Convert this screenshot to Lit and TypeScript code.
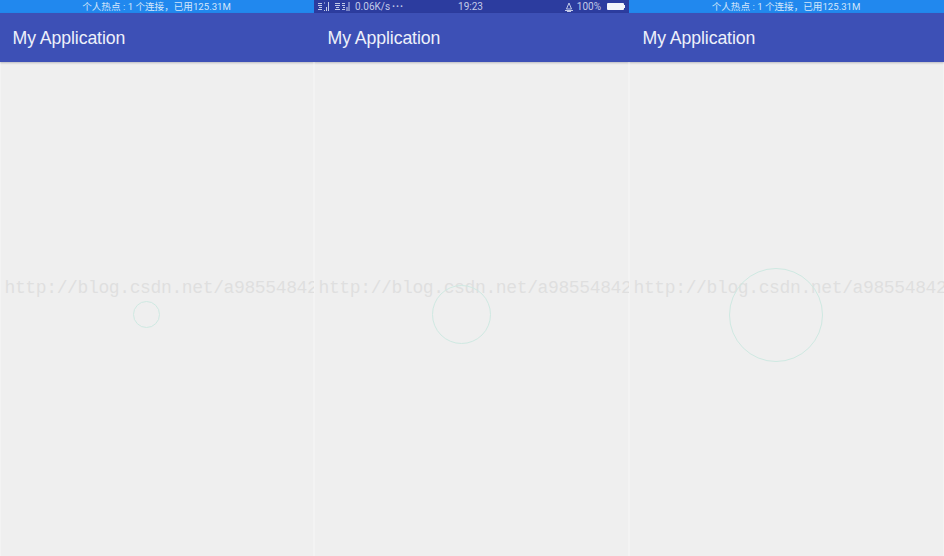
import { LitElement, html, css } from "lit";
import { customElement, property } from "lit/decorators.js";

@customElement("phone-panel")
class PhonePanel extends LitElement {
  @property({ type: Boolean }) dark = false;
  @property({ type: Boolean, reflect: true }) first = false;
  @property({ type: Number }) radius = 13;
  @property({ type: Number }) cx = 147;
  static styles = css`
    :host { display: flex; flex-direction: column; position: relative; overflow: hidden; background: #efefef; height: 556px; }
    .status { height: 13px; flex: none; background: #2188ee; color: #d3e6fb; font: 9.6px/13px "Roboto","Noto Sans CJK SC",sans-serif; text-align: center; padding-right: 1px; }
    .status.dark { background: #2c3c9f; color: #c3cbe8; font-size: 10px; display: grid; grid-template-columns: 1fr auto 1fr; align-items: center; padding: 0 4px 0 3px; text-align: left; }
    .left, .right { display: flex; align-items: center; }
    .left { gap: 3px; }
    .speed { margin-left: 1px; white-space: nowrap; }
    .dots { letter-spacing: 1px; font-weight: 700; margin-left: 2px; }
    .right { justify-content: flex-end; gap: 3px; }
    .clock { margin-left: -1px; }
    .bar { height: 49px; flex: none; background: #3d50b6; color: #eef0fa; font: 17.7px/49px "Liberation Sans",sans-serif; padding-left: 13.6px; box-shadow: 0 1px 2px rgba(60,60,80,.3); position: relative; letter-spacing: -.1px; }
    :host([first]) .bar { padding-left: 12.6px; }
    .bar span { position: relative; top: 1px; }
    .body { flex: 1; border-left: 1px solid #f3f3f3; border-right: 1px solid #f3f3f3; }
    .mark { position: absolute; left: 4.5px; top: 277px; font: 18px/22px "Liberation Mono",monospace; letter-spacing: -.37px; color: #dfdfdf; white-space: nowrap; }
    .ring { position: absolute; border: 1px solid #cfe9e2; border-radius: 50%; box-sizing: border-box; }
    svg { display: block; flex: none; }
    .bell { margin-right: 0; }
    .batt { width: 17px; height: 7px; background: #f2f4fb; border-radius: 1px; position: relative; margin: 0 1px 0 3px; }
    .batt::after { content: ""; position: absolute; right: -1px; top: 2px; width: 1px; height: 3px; background: #f2f4fb; }
  `;
  render() {
    const r = this.radius;
    const left = Math.floor(this.cx - r);
    const top = Math.floor(315 - r);
    return html`
      ${this.dark
        ? html`<div class="status dark">
            <div class="left">
              <svg width="14" height="11" viewBox="0 0 14 11"><path d="M1 2.5h4M1 4.5h4M2 6.5h3M1 8.5h4M7 2h1M7 9.5h1M9.5 6v4M11.5 1v9" stroke="#c3cbe8" fill="none"/></svg>
              <svg width="17" height="11" viewBox="0 0 17 11"><path d="M1 2.5h5M1 4.5h5M2 6.5h3M1 8.5h5M8 2.5h3M8 4.5h3M9 6.5h2M8 8.5h3M13 6v4M15 1v9" stroke="#c3cbe8" fill="none"/></svg>
              <span class="speed">0.06K/s<span class="dots">···</span></span>
            </div>
            <span class="clock">19:23</span>
            <div class="right">
              <svg class="bell" width="10" height="10" viewBox="0 0 10 10"><path d="M5 1 2.5 7h5zM1 8.5h8M3 9.5h4" stroke="#c3cbe8" fill="none"/></svg>
              <span>100%</span>
              <div class="batt"></div>
            </div>
          </div>`
        : html`<div class="status">个人热点 : 1 个连接，已用125.31M</div>`}
      <div class="bar"><span>My Application</span></div>
      <div class="body"></div>
      <div class="mark">http://blog.csdn.net/a98554842</div>
      <div class="ring" style="width:${r * 2}px;height:${r * 2}px;left:${left}px;top:${top}px"></div>
    `;
  }
}

@customElement("app-root")
class AppRoot extends LitElement {
  static styles = css`
    :host { display: grid; grid-template-columns: 314px 315px 315px; width: 944px; height: 556px; overflow: hidden; }
  `;
  render() {
    return html`
      <phone-panel first .radius=${13.5} .cx=${146.5}></phone-panel>
      <phone-panel dark .radius=${29.5} .cx=${147.5}></phone-panel>
      <phone-panel .radius=${47} .cx=${147.5}></phone-panel>
    `;
  }
}
